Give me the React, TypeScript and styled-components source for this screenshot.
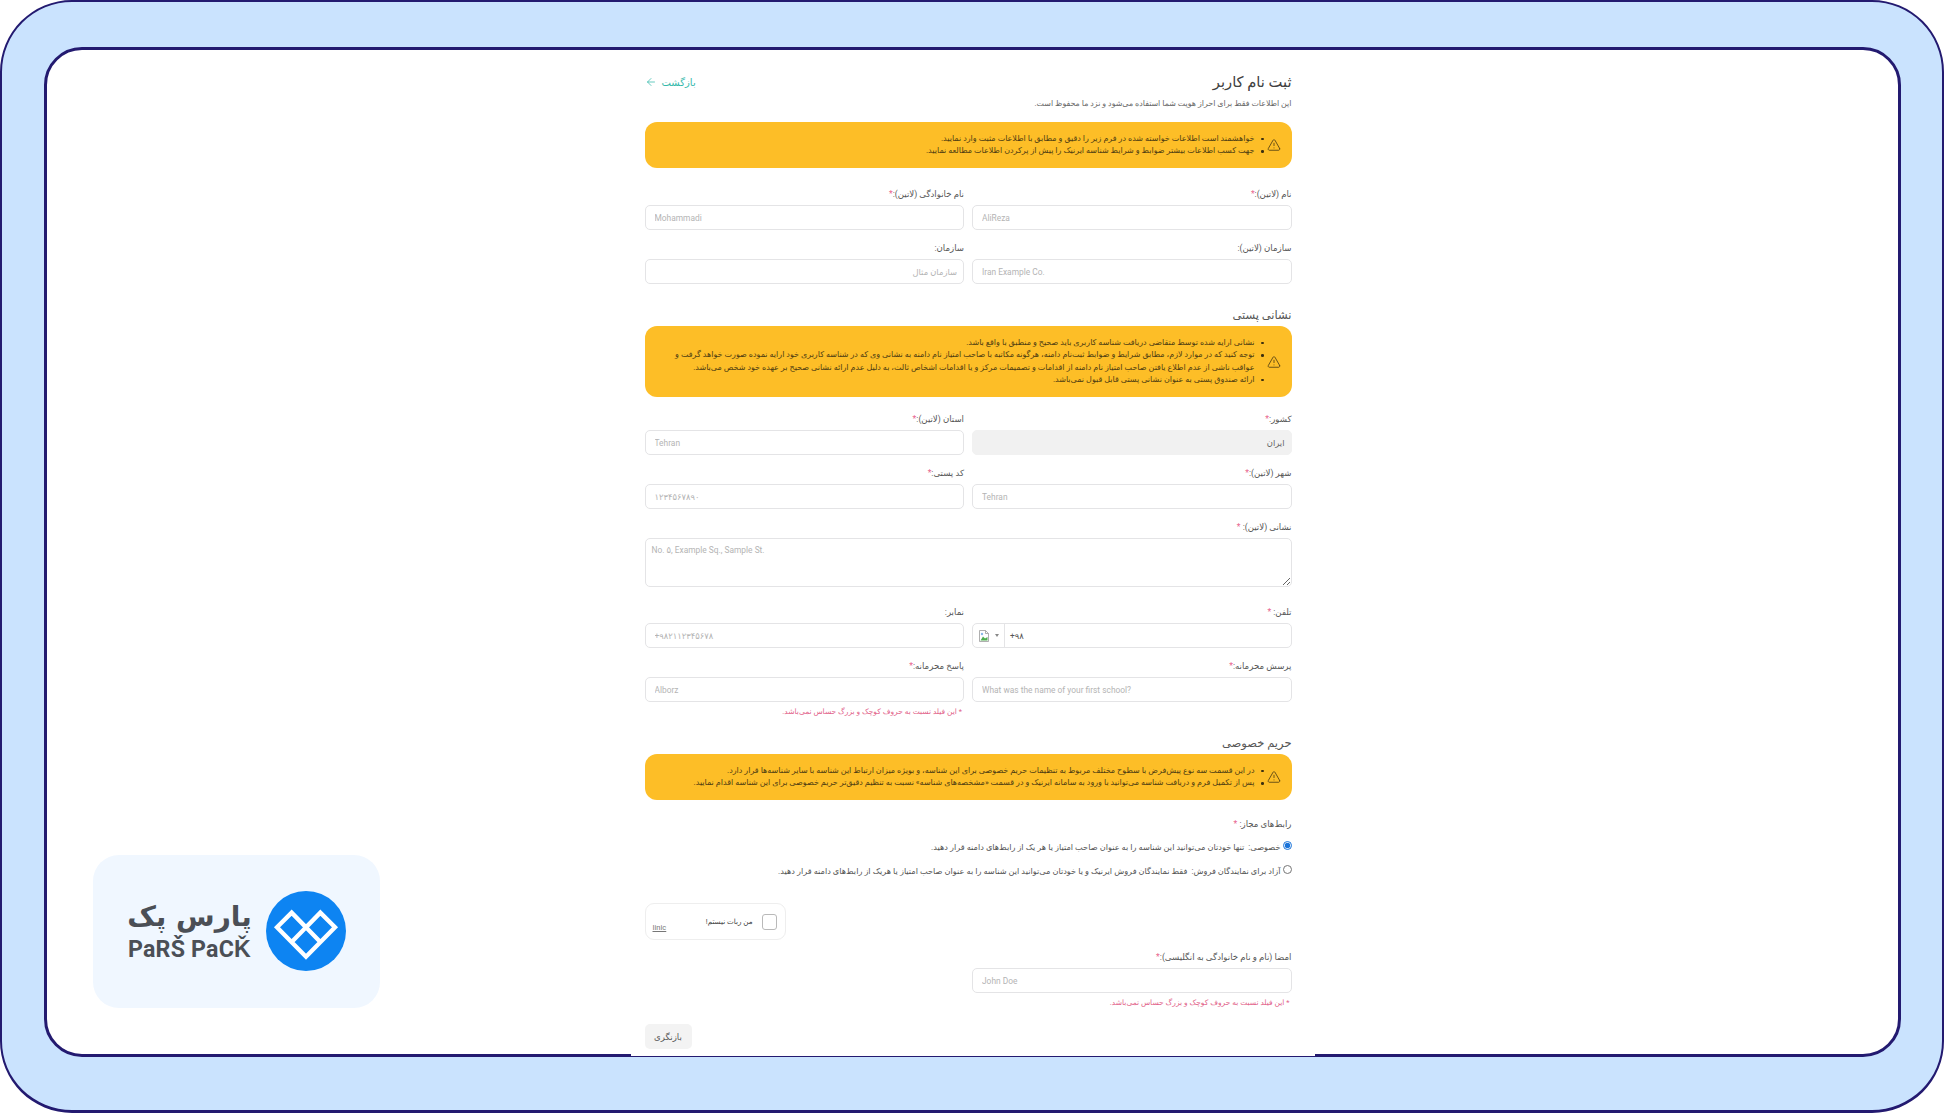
import styled, { createGlobalStyle } from 'styled-components';
import { TriangleAlert, ArrowLeft } from 'lucide-react';

const GlobalStyle = createGlobalStyle`
  html, body {
    margin: 0;
    padding: 0;
    background: #fff;
  }
  * {
    box-sizing: border-box;
  }
`;

const FONT = `Roboto, "DejaVu Sans", sans-serif`;

const Page = styled.div`
  width: 1944px;
  height: 1113px;
  background: #fff;
  overflow: hidden;
  font-family: ${FONT};
`;

const OuterFrame = styled.div`
  position: relative;
  height: 100%;
  background: #cae3fe;
  border: 2px solid #231a70;
  border-bottom-width: 3px;
  border-radius: 72px;
  padding: 45px 41px 53px 42px;
  display: flex;
`;

const InnerFrame = styled.div`
  flex: 1;
  background: #fff;
  border: 3px solid #231a70;
  border-radius: 38px;
  display: flex;
  justify-content: center;
`;

const Sheet = styled.main`
  width: 684px;
  margin-bottom: -2px;
  padding: 22px 23px 0 14px;
  background: #fff;
  position: relative;
  direction: rtl;
  color: #4a4a4a;
`;

const TitleRow = styled.div`
  display: flex;
  justify-content: space-between;
  align-items: center;
  height: 20px;
`;

const Title = styled.h1`
  margin: 0;
  font-size: 14.7px;
  font-weight: 400;
  color: #404040;
`;

const BackLink = styled.a`
  display: flex;
  align-items: center;
  gap: 5px;
  font-size: 10px;
  color: #35b9ab;
`;

const Subtitle = styled.p`
  margin: 5px 0 0;
  font-size: 7.9px;
  line-height: 14px;
  color: #666;
`;

const Banner = styled.div<{ $height: number; $top: number }>`
  height: ${p => p.$height}px;
  margin-top: ${p => p.$top}px;
  background: #fdbe27;
  border-radius: 12px;
  padding: 0 11px 0 10px;
  display: flex;
  align-items: center;
  gap: 3px;
  color: #4f3d12;

  svg {
    flex: none;
  }
`;

const BannerList = styled.ul`
  margin: 0;
  padding: 0;
  list-style: none;
  font-size: 8px;
  line-height: 12.3px;

  li {
    position: relative;
    padding-right: 9px;
  }

  li::before {
    content: '';
    position: absolute;
    right: 0;
    top: 5px;
    width: 2.5px;
    height: 2.5px;
    border-radius: 50%;
    background: #3d3010;
  }
`;

const Row = styled.div<{ $top?: number }>`
  display: grid;
  grid-template-columns: 1fr 1fr;
  gap: 8px;
  margin-top: ${p => p.$top ?? 11}px;
`;

const Field = styled.div`
  min-width: 0;
`;

const AddressField = styled(Field)`
  margin-top: 11px;
`;

const Label = styled.label`
  display: block;
  height: 14px;
  margin-bottom: 4px;
  font-size: 8.6px;
  line-height: 14px;
  color: #555;

  b {
    color: #e8648e;
    font-weight: 400;
  }
`;

const Input = styled.input<{ $rtl?: boolean }>`
  display: block;
  width: 100%;
  height: 25px;
  padding: 0 ${p => (p.$rtl ? 6 : 9)}px;
  direction: ${p => (p.$rtl ? 'rtl' : 'ltr')};
  text-align: ${p => (p.$rtl ? 'right' : 'left')};
  border: 1px solid #e4e4e6;
  border-radius: 5px;
  background: #fff;
  font-family: ${FONT};
  font-size: 8.4px;
  color: #555;
  outline: none;

  &::placeholder {
    color: #b4b4b4;
    opacity: 1;
  }

  &:disabled {
    background: #f1f1f1;
    border-color: #f1f1f1;
    color: #666;
    opacity: 1;
  }
`;

const TextArea = styled.textarea`
  display: block;
  width: 100%;
  height: 49px;
  padding: 6px;
  direction: ltr;
  border: 1px solid #e4e4e6;
  border-radius: 5px;
  font-family: ${FONT};
  font-size: 8.4px;
  outline: none;

  &::placeholder {
    color: #b4b4b4;
    opacity: 1;
  }
`;

const PhoneBox = styled.div`
  direction: ltr;
  display: flex;
  align-items: center;
  height: 25px;
  border: 1px solid #e4e4e6;
  border-radius: 5px;
  font-size: 8.4px;
  color: #555;
`;

const FlagButton = styled.div`
  width: 32px;
  height: 100%;
  padding-left: 5px;
  display: flex;
  align-items: center;
  gap: 5px;
  border-right: 1px solid #e4e4e6;
`;

const Caret = styled.span`
  width: 0;
  height: 0;
  border-left: 2.5px solid transparent;
  border-right: 2.5px solid transparent;
  border-top: 3px solid #888;
`;

const PhoneCode = styled.span`
  padding-left: 5px;
`;

const Hint = styled.div`
  margin-top: 4px;
  padding-right: 2px;
  font-size: 7.5px;
  line-height: 12px;
  color: #e2638a;
`;

const SectionTitle = styled.h2<{ $top: number }>`
  margin: ${p => p.$top}px 0 0;
  font-size: 11.5px;
  line-height: 20px;
  font-weight: 400;
  color: #555;
`;

const GroupLabel = styled(Label)`
  margin: 17px 0 0;
`;

const RadioRow = styled.label<{ $top: number }>`
  display: flex;
  align-items: center;
  gap: 2px;
  height: 14px;
  margin-top: ${p => p.$top}px;
  font-size: 8.2px;
  color: #555;

  input {
    width: 9px;
    height: 9px;
    margin: 0 0 3px 0;
    accent-color: #1a73d9;
  }
`;

const Captcha = styled.div`
  display: flex;
  align-items: center;
  width: 141px;
  height: 37px;
  margin-top: 25px;
  margin-right: auto;
  padding: 0 8px 0 7px;
  border: 1px solid #eeeeee;
  border-radius: 9px;
`;

const CaptchaBox = styled.span`
  width: 15px;
  height: 16px;
  border: 1px solid #b9b9b9;
  border-radius: 3px;
`;

const CaptchaText = styled.span`
  margin-right: 9px;
  font-size: 7.2px;
  color: #444;
`;

const CaptchaBrand = styled.span`
  margin-right: auto;
  align-self: flex-end;
  margin-bottom: 7px;
  font-size: 7.5px;
  color: #777;
  text-decoration: underline;
`;

const ResetButton = styled.button`
  display: block;
  width: 47px;
  height: 25px;
  margin: 15px auto 0 0;
  border: 0;
  border-radius: 5px;
  background: #f3f3f3;
  font-family: ${FONT};
  font-size: 8.6px;
  color: #555;
`;

const LogoCard = styled.div`
  position: absolute;
  left: 91px;
  top: 853px;
  width: 287px;
  height: 153px;
  padding-bottom: 2px;
  background: #f0f7ff;
  border-radius: 26px;
  display: flex;
  align-items: center;
  justify-content: center;
  gap: 14px;
`;

const LogoWords = styled.div`
  display: flex;
  flex-direction: column;
  align-items: center;
  color: #4b4f56;
  font-weight: 700;
`;

const LogoFa = styled.span`
  direction: rtl;
  font-family: "DejaVu Sans", sans-serif;
  font-size: 28px;
  line-height: 36px;
`;

const LogoEn = styled.span`
  font-family: Roboto, sans-serif;
  font-size: 23.2px;
  line-height: 28px;
  letter-spacing: 0.2px;
`;

const BrokenFlag = () => (
  <svg width="12" height="12" viewBox="0 0 12 12" fill="none">
    <path d="M1.5 0.5H7.5L10.5 3.5V11.5H1.5Z" fill="#fff" stroke="#9a9a9a" strokeWidth="0.8" />
    <path d="M7.5 0.5V3.5H10.5" stroke="#9a9a9a" strokeWidth="0.8" />
    <path d="M2.5 10.5L5 6.5L7 8.5L9.5 7V10.5Z" fill="#4fae4f" />
    <circle cx="4" cy="4" r="1.2" fill="#8ab8e8" />
  </svg>
);

const LogoMark = () => (
  <svg width="80" height="80" viewBox="0 0 240 240">
    <circle cx="120" cy="120" r="120" fill="#0d84f2" />
    <path
      d="M33 109L77 65L120 109L163 65L207 109L120 197ZM77 153L120 109L163 153"
      fill="none"
      stroke="#fff"
      strokeWidth="13"
    />
  </svg>
);

const Star = () => <b>*</b>;

const App = () => (
  <Page>
    <GlobalStyle />
    <OuterFrame>
      <InnerFrame>
        <Sheet>
          <TitleRow>
            <Title>ثبت نام کاربر</Title>
            <BackLink>
              بازگشت
              <ArrowLeft size={12} strokeWidth={1.5} />
            </BackLink>
          </TitleRow>
          <Subtitle>این اطلاعات فقط برای احراز هویت شما استفاده می‌شود و نزد ما محفوظ است.</Subtitle>

          <Banner $height={46} $top={11}>
            <TriangleAlert size={14} strokeWidth={1.3} color="#3d3010" />
            <BannerList>
              <li>خواهشمند است اطلاعات خواسته شده در فرم زیر را دقیق و مطابق با اطلاعات مثبت وارد نمایید.</li>
              <li>جهت کسب اطلاعات بیشتر ضوابط و شرایط شناسه ایرنیک را پیش از پرکردن اطلاعات مطالعه نمایید.</li>
            </BannerList>
          </Banner>

          <Row $top={19}>
            <Field>
              <Label>نام (لاتین):<Star /></Label>
              <Input placeholder="AliReza" />
            </Field>
            <Field>
              <Label>نام خانوادگی (لاتین):<Star /></Label>
              <Input placeholder="Mohammadi" />
            </Field>
          </Row>
          <Row>
            <Field>
              <Label>سازمان (لاتین):</Label>
              <Input placeholder="Iran Example Co." />
            </Field>
            <Field>
              <Label>سازمان:</Label>
              <Input $rtl placeholder="سازمان مثال" />
            </Field>
          </Row>

          <SectionTitle $top={21}>نشانی پستی</SectionTitle>
          <Banner $height={71} $top={1}>
            <TriangleAlert size={14} strokeWidth={1.3} color="#3d3010" />
            <BannerList>
              <li>نشانی ارایه شده توسط متقاضی دریافت شناسه کاربری باید صحیح و منطبق با واقع باشد.</li>
              <li>
                توجه کنید که در موارد لازم، مطابق شرایط و ضوابط ثبت‌نام دامنه، هرگونه مکاتبه با صاحب امتیاز نام دامنه به نشانی وی که در شناسه کاربری خود ارایه نموده صورت خواهد گرفت و عواقب ناشی از عدم اطلاع یافتن صاحب امتیاز نام دامنه از اقدامات و تصمیمات مرکز و یا اقدامات اشخاص ثالث، به دلیل عدم ارائه نشانی صحیح بر عهده خود شخص می‌باشد.
              </li>
              <li>ارائه صندوق پستی به عنوان نشانی پستی قابل قبول نمی‌باشد.</li>
            </BannerList>
          </Banner>

          <Row $top={15}>
            <Field>
              <Label>کشور:<Star /></Label>
              <Input $rtl disabled value="ایران" />
            </Field>
            <Field>
              <Label>استان (لاتین):<Star /></Label>
              <Input placeholder="Tehran" />
            </Field>
          </Row>
          <Row>
            <Field>
              <Label>شهر (لاتین):<Star /></Label>
              <Input placeholder="Tehran" />
            </Field>
            <Field>
              <Label>کد پستی:<Star /></Label>
              <Input placeholder="۱۲۳۴۵۶۷۸۹۰" />
            </Field>
          </Row>

          <AddressField>
            <Label>نشانی (لاتین): <Star /></Label>
            <TextArea placeholder="No. ۵, Example Sq., Sample St." />
          </AddressField>

          <Row $top={18}>
            <Field>
              <Label>تلفن: <Star /></Label>
              <PhoneBox>
                <FlagButton>
                  <BrokenFlag />
                  <Caret />
                </FlagButton>
                <PhoneCode>+۹۸</PhoneCode>
              </PhoneBox>
            </Field>
            <Field>
              <Label>نمابر:</Label>
              <Input placeholder="+۹۸۲۱۱۲۳۴۵۶۷۸" />
            </Field>
          </Row>
          <Row>
            <Field>
              <Label>پرسش محرمانه:<Star /></Label>
              <Input placeholder="What was the name of your first school?" />
            </Field>
            <Field>
              <Label>پاسخ محرمانه:<Star /></Label>
              <Input placeholder="Alborz" />
              <Hint>* این فیلد نسبت به حروف کوچک و بزرگ حساس نمی‌باشد.</Hint>
            </Field>
          </Row>

          <SectionTitle $top={15}>حریم خصوصی</SectionTitle>
          <Banner $height={46} $top={1}>
            <TriangleAlert size={14} strokeWidth={1.3} color="#3d3010" />
            <BannerList>
              <li>در این قسمت سه نوع پیش‌فرض با سطوح مختلف مربوط به تنظیمات حریم خصوصی برای این شناسه، و بویژه میزان ارتباط این شناسه با سایر شناسه‌ها قرار دارد.</li>
              <li>پس از تکمیل فرم و دریافت شناسه می‌توانید با ورود به سامانه ایرنیک و در قسمت «مشخصه‌های شناسه» نسبت به تنظیم دقیق‌تر حریم خصوصی برای این شناسه اقدام نمایید.</li>
            </BannerList>
          </Banner>

          <GroupLabel>رابط‌های مجاز: <Star /></GroupLabel>
          <RadioRow $top={9}>
            <input type="radio" name="contact" defaultChecked />
            خصوصی:&nbsp; تنها خودتان می‌توانید این شناسه را به عنوان صاحب امتیاز یا هر یک از رابط‌های دامنه قرار دهید.
          </RadioRow>
          <RadioRow $top={10}>
            <input type="radio" name="contact" />
            آزاد برای نمایندگان فروش:&nbsp; فقط نمایندگان فروش ایرنیک و یا خودتان می‌توانید این شناسه را به عنوان صاحب امتیاز یا هریک از رابط‌های دامنه قرار دهید.
          </RadioRow>

          <Captcha>
            <CaptchaBox />
            <CaptchaText>من ربات نیستم!</CaptchaText>
            <CaptchaBrand>Iinic</CaptchaBrand>
          </Captcha>

          <Row $top={10}>
            <Field>
              <Label>امضا (نام و نام خانوادگی به انگلیسی):<Star /></Label>
              <Input placeholder="John Doe" />
              <Hint>* این فیلد نسبت به حروف کوچک و بزرگ حساس نمی‌باشد.</Hint>
            </Field>
          </Row>

          <ResetButton>بازنگری</ResetButton>
        </Sheet>
      </InnerFrame>
      <LogoCard>
        <LogoWords>
          <LogoFa>پارس پک</LogoFa>
          <LogoEn>PaRŠ PaCǨ</LogoEn>
        </LogoWords>
        <LogoMark />
      </LogoCard>
    </OuterFrame>
  </Page>
);

export default App;
